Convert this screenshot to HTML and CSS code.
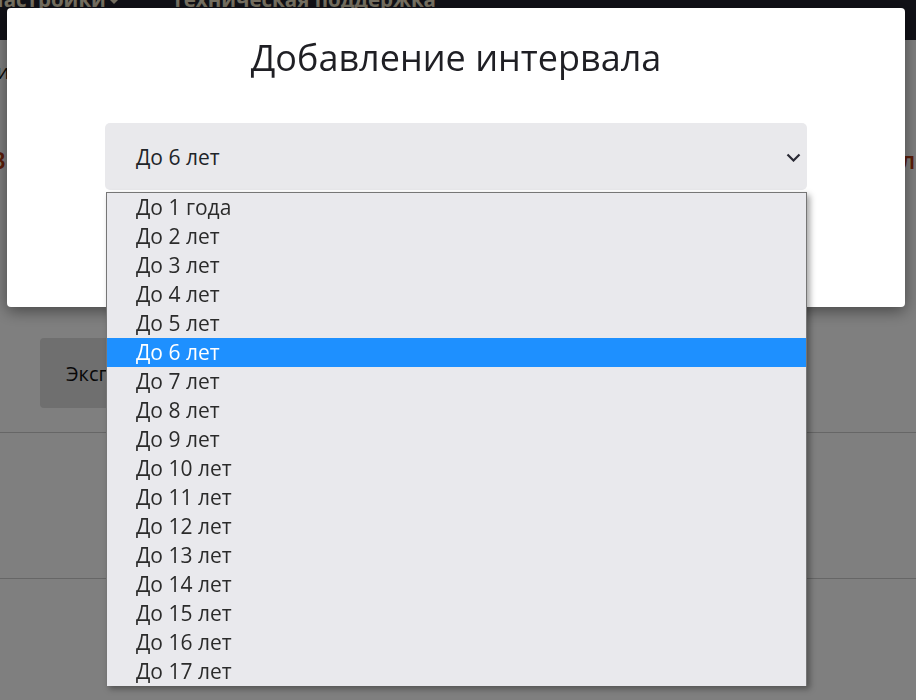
FILE: index.html
```html
<!DOCTYPE html>
<html lang="ru">
<head>
<meta charset="utf-8">
<link rel="stylesheet" href="styles.css">
</head>
<body>
<header class="nav">
  <span class="nav-item">Настройки<svg class="caret" width="12" height="8" viewBox="0 0 12 8"><path d="M1 1l5 5 5-5z" fill="currentColor"/></svg></span>
  <span class="nav-item">Техническая поддержка</span>
</header>
<main class="page">
  <div class="crumb">Справочника</div>
  <div class="warn">Внимание: изменения применяются сразу после сохранения интервало</div>
  <div class="btn-row"><button class="btn">Экспорт</button></div>
  <hr class="rule">
  <div class="spacer"></div>
  <hr class="rule">
</main>
<div class="overlay"></div>
<div class="modal">
  <h1 class="modal-title">Добавление интервала</h1>
  <div class="select-wrap">
    <div class="select">
      <span>До 6 лет</span>
      <svg class="chev" width="15" height="9" viewBox="0 0 15 9"><path d="M1.5 1.5l6 6 6-6" fill="none" stroke="#2a2a35" stroke-width="2.2"/></svg>
    </div>
    <ul class="list">
      <li>До 1 года</li>
      <li>До 2 лет</li>
      <li>До 3 лет</li>
      <li>До 4 лет</li>
      <li>До 5 лет</li>
      <li class="sel">До 6 лет</li>
      <li>До 7 лет</li>
      <li>До 8 лет</li>
      <li>До 9 лет</li>
      <li>До 10 лет</li>
      <li>До 11 лет</li>
      <li>До 12 лет</li>
      <li>До 13 лет</li>
      <li>До 14 лет</li>
      <li>До 15 лет</li>
      <li>До 16 лет</li>
      <li>До 17 лет</li>
    </ul>
  </div>
</div>
</body>
</html>
```
FILE: styles.css
```css
* { box-sizing: border-box; }
html, body { margin: 0; padding: 0; }
body {
  width: 916px;
  height: 700px;
  overflow: hidden;
  font-family: "Open Sans", "Liberation Sans", sans-serif;
  background: #fff;
  color: #212529;
}
.nav {
  height: 40px;
  background: #23232f;
  display: flex;
  gap: 52px;
  margin-left: -12px;
  align-items: flex-start;
}
.nav-item {
  color: #f2e6c8;
  font-weight: 700;
  font-size: 20.5px;
  line-height: 20px;
  margin-top: -11px;
  display: flex;
  align-items: center;
  gap: 2px;
}
.caret { color: #f2e6c8; margin-top: 6px; }
.crumb {
  font-size: 20px;
  margin-top: 18px;
  margin-left: -100px;
  color: #111;
}
.warn {
  margin-top: 58px;
  margin-left: -10px;
  color: #b83a12;
  font-size: 24px;
  font-weight: 600;
  white-space: nowrap;
  width: 940px;
  text-align: justify;
  text-align-last: justify;
}
.btn-row { padding-left: 40px; margin-top: 162px; }
.btn {
  font-family: inherit;
  font-size: 20px;
  color: #111;
  background: #dedede;
  border: 0;
  border-radius: 4px;
  height: 70px;
  width: 180px;
  text-align: left;
  padding-left: 26px;
}
.rule { margin: 24px 0 0; border: 0; border-top: 1px solid #ccc; }
.spacer { height: 145px; }
.rule + .spacer + .rule { margin-top: 0; }
.overlay {
  position: fixed;
  inset: 0;
  background: rgba(0, 0, 0, 0.5);
}
.modal {
  position: fixed;
  left: 7px;
  top: 8px;
  width: 898px;
  height: 299px;
  background: #fff;
  border-radius: 4px;
  box-shadow: 0 4px 16px rgba(0,0,0,0.45);
  display: flex;
  flex-direction: column;
  align-items: center;
}
.modal-title {
  margin: 26px 0 0;
  font-weight: 400;
  font-size: 36px;
  line-height: 48px;
  color: #1f1f24;
}
.select-wrap { position: relative; margin-top: 41px; width: 702px; }
.select {
  height: 67px;
  background: #e9e9ec;
  border-radius: 5px;
  display: flex;
  align-items: center;
  justify-content: space-between;
  padding: 0 6px 0 31px;
  font-size: 21px;
  color: #212529;
}
.chev { margin-top: 2px; }
.list {
  position: absolute;
  left: 1px;
  top: 69px;
  width: 701px;
  margin: 0;
  padding: 0;
  list-style: none;
  background: #e9e9ed;
  border: 1px solid #767676;
  border-bottom: 0;
  box-shadow: 3px 3px 6px rgba(0,0,0,0.35);
}
.list li {
  height: 29px;
  line-height: 29px;
  padding-left: 29px;
  font-size: 21px;
  color: #2b2b2b;
}
.list li.sel { background: #1e90ff; color: #fff; }
```
